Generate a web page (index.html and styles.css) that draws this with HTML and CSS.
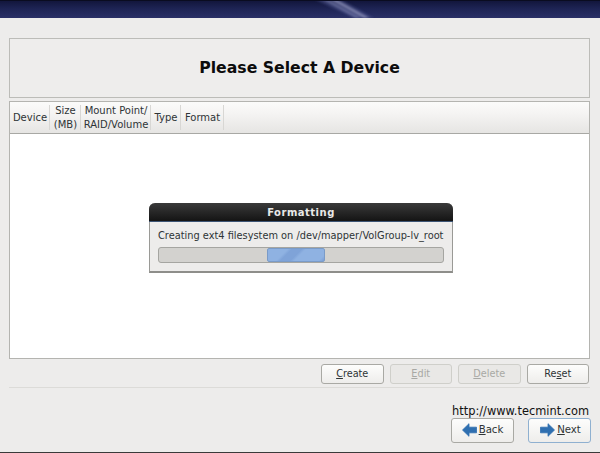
FILE: index.html
```html
<!DOCTYPE html>
<html lang="en">
<head>
<meta charset="utf-8">
<title>Please Select A Device</title>
<link rel="stylesheet" href="styles.css">
</head>
<body>
<header class="topbar">
  <svg class="streak" width="70" height="18" viewBox="0 0 70 18" aria-hidden="true">
    <defs><filter id="soft"><feGaussianBlur stdDeviation="0.8"/></filter></defs>
    <g filter="url(#soft)">
      <polygon points="0,-1 26,-1 60,18 40,18" fill="#4e5690" opacity=".5"/>
      <polygon points="8,-1 13,-1 47,18 42,18" fill="#8d92bc" opacity=".5"/>
      <polygon points="16,-1 21,-1 55,18 50,18" fill="#a6a9cc" opacity=".65"/>
    </g>
  </svg>
</header>
<main class="main">
  <div class="title-box"><h1>Please Select A Device</h1></div>
  <section class="table">
    <div class="thead">
      <div class="th col-device">Device</div>
      <div class="th col-size">Size<br>(MB)</div>
      <div class="th col-mount">Mount Point/<br>RAID/Volume</div>
      <div class="th col-type">Type</div>
      <div class="th col-format">Format</div>
    </div>
    <div class="tbody"></div>
  </section>
  <div class="actions">
    <button class="btn"><u>C</u>reate</button>
    <button class="btn" disabled><u>E</u>dit</button>
    <button class="btn" disabled><u>D</u>elete</button>
    <button class="btn">Re<u>s</u>et</button>
  </div>
  <hr class="sep">
  <div class="nav">
    <button class="btn nav-btn">
      <svg width="15" height="14" viewBox="0 0 15 14" aria-hidden="true"><path d="M.5 7 7 .7v3.500h7.500v5.600H7v3.500z" fill="#2f6fb0" stroke="#2f6fb0" stroke-width=".8" stroke-linejoin="round"/></svg>
      <span><u>B</u>ack</span>
    </button>
    <button class="btn nav-btn nav-next">
      <svg width="15" height="14" viewBox="0 0 15 14" aria-hidden="true"><path d="M14.500 7 8 .7v3.500H.5v5.600H8v3.500z" fill="#2f6fb0" stroke="#2f6fb0" stroke-width=".8" stroke-linejoin="round"/></svg>
      <span><u>N</u>ext</span>
    </button>
  </div>
</main>
<div class="bottom-line"></div>
<div class="dialog">
  <div class="dialog-title">Formatting</div>
  <div class="dialog-body">
    <div class="dialog-text">Creating ext4 filesystem on /dev/mapper/VolGroup-lv_root</div>
    <div class="progress"><div class="chunk"></div></div>
  </div>
</div>
<div class="watermark">http://www.tecmint.com</div>
</body>
</html>
```
FILE: styles.css
```css
* { box-sizing: border-box; }
html, body { margin: 0; height: 453px; overflow: hidden; }
body {
  position: relative;
  display: flex;
  flex-direction: column;
  background: #edeceb;
  font-family: "DejaVu Sans", sans-serif;
  font-size: 10px;
  color: #2e3436;
}
.topbar {
  height: 18px;
  flex: none;
  display: flex;
  justify-content: center;
  padding-left: 98px;
  overflow: hidden;
  background: linear-gradient(#12163c 0, #1e2454 45%, #2a3066 100%);
  border-top: 1px solid #0a0c20;
}
.streak { margin-top: -1px; flex: none; }
.main {
  flex: 1;
  display: flex;
  flex-direction: column;
  padding: 20px 10px 0 9px;
}
.title-box {
  height: 60px;
  padding-bottom: 2px;
  display: flex;
  align-items: center;
  justify-content: center;
  border: 1px solid #bcbcb8;
  background: #eeedec;
}
.title-box h1 {
  margin: 0;
  font-size: 15.7px;
  font-weight: 700;
  color: #0c0c0c;
}
.table {
  margin-top: 3px;
  height: 258px;
  display: flex;
  flex-direction: column;
  border: 1px solid #b4b4b0;
  background: #fff;
}
.thead {
  height: 32px;
  flex: none;
  display: flex;
  background: linear-gradient(#fbfbfa 0, #f4f3f2 40%, #e6e5e3 100%);
  border-bottom: 1px solid #a8a8a4;
}
.th {
  display: flex;
  align-items: center;
  justify-content: center;
  text-align: center;
  line-height: 14px;
  font-size: 10px;
  margin: 3px 0;
  padding-left: 1px;
  border-right: 1px solid #d8d7d4;
}
.col-device { width: 40px; }
.col-size { width: 31px; }
.col-mount { width: 70px; }
.col-type { width: 30px; }
.col-format { width: 43px; }
.tbody { flex: 1; }
.actions {
  margin-top: 5px;
  display: flex;
  justify-content: flex-end;
  gap: 6px;
  padding-right: 1px;
}
.btn {
  width: 62.500px;
  height: 20px;
  padding: 0 0 2px;
  border: 1px solid #a9a9a4;
  border-radius: 3px;
  background: linear-gradient(#fdfdfc, #eeedeb);
  font-family: inherit;
  font-size: 9.700px;
  color: #2e3436;
}
.btn:disabled {
  border-color: #cfcfca;
  background: #e9e8e6;
  color: #a8a8a4;
}
.sep {
  width: 100%;
  margin: 3px 0 0;
  border: 0;
  border-top: 1px solid #dcdbd8;
}
.nav {
  margin-top: 30px;
  margin-right: -1px;
  display: flex;
  justify-content: flex-end;
  gap: 14px;
}
.nav-btn {
  width: 63px;
  height: 25px;
  display: flex;
  align-items: center;
  justify-content: center;
  gap: 2px;
  font-size: 10.200px;
}
.nav-next { border-color: #8fb0d0; padding-left: 2px; }
.bottom-line { height: 1px; flex: none; background: #3a3a3a; }
.dialog {
  position: absolute;
  left: 149px;
  top: 203px;
  width: 304px;
  height: 70px;
  border-bottom: 2px solid #8e8e8a;
  border-left: 1px solid #9a9a96;
  border-right: 1px solid #9a9a96;
  border-radius: 6px 6px 0 0;
  background: #edeceb;
}
.dialog-title {
  height: 19px;
  margin: 0 -1px;
  border-radius: 6px 6px 0 0;
  background: linear-gradient(#3a3a3a, #141414);
  border-bottom: 1px solid #3c5474;
  color: #e8e8e8;
  text-align: center;
  font-size: 10px;
  font-weight: 700;
  letter-spacing: .5px;
  line-height: 20px;
}
.dialog-body { padding: 7px 8px 0; }
.dialog-text { font-size: 9.800px; line-height: 14px; white-space: nowrap; }
.progress {
  margin-top: 4px;
  height: 16px;
  padding-left: 108px;
  border: 1px solid #a5a5a1;
  border-radius: 3px;
  background: #d3d2cf;
}
.chunk {
  width: 58px;
  height: 14px;
  border: 1px solid #7a9bc8;
  border-radius: 2px;
  background: repeating-linear-gradient(135deg, #8fb2e2 0 14px, #7fa3d8 17px 24px, #8fb2e2 27px 30px);
}
.watermark {
  position: absolute;
  left: 452px;
  top: 404px;
  font-size: 11.400px;
  color: #111;
  line-height: 14px;
  white-space: nowrap;
}
```
